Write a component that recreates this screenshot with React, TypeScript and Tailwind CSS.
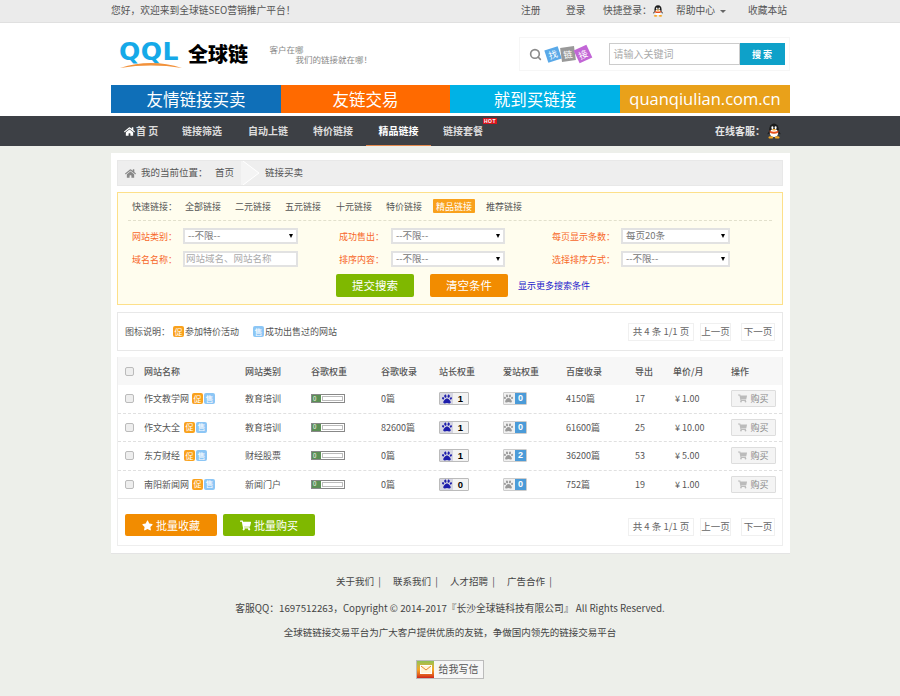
import { FaHome, FaPaw, FaShoppingCart, FaStar } from "react-icons/fa";
import { Search } from "lucide-react";

const rows = [
  { name: "作文教学网", cat: "教育培训", gg: "0篇", zz: 1, az: 0, bd: "4150篇", out: "17", price: "¥ 1.00", gap: "ml-[3px]" },
  { name: "作文大全", cat: "教育培训", gg: "82600篇", zz: 1, az: 0, bd: "61600篇", out: "25", price: "¥ 10.00", gap: "ml-[4px]" },
  { name: "东方财经", cat: "财经股票", gg: "0篇", zz: 1, az: 2, bd: "36200篇", out: "53", price: "¥ 5.00", gap: "ml-[4px]" },
  { name: "南阳新闻网", cat: "新闻门户", gg: "0篇", zz: 0, az: 0, bd: "752篇", out: "19", price: "¥ 1.00", gap: "ml-[3px]" },
];

const cols = "grid grid-cols-[19px_101px_66px_70px_58px_64px_63px_69px_38px_58px_45px] items-center pl-[7px]";

function Penguin({ size }: { size: number }) {
  return (
    <svg width={size} height={size} viewBox="0 0 20 20">
      <ellipse cx="10" cy="8" rx="6" ry="7.5" fill="#1c1c1c" />
      <ellipse cx="10" cy="12.5" rx="5" ry="5" fill="#fff" />
      <path d="M4.5 9.5q5.500 3 11 0v2.500q-5.500 3-11 0Z" fill="#e8501c" />
      <ellipse cx="8" cy="6" rx="1.300" ry="1.800" fill="#fff" />
      <ellipse cx="12" cy="6" rx="1.300" ry="1.800" fill="#fff" />
      <ellipse cx="10" cy="8.500" rx="2.500" ry="1" fill="#f5a623" />
      <ellipse cx="6" cy="18" rx="3" ry="1.500" fill="#f5a623" />
      <ellipse cx="14" cy="18" rx="3" ry="1.500" fill="#f5a623" />
      <path d="M4 10l-2.500 4 2.500-.5ZM16 10l2.500 4-2.500-.5Z" fill="#1c1c1c" />
    </svg>
  );
}

function Select({ value, width }: { value: string; width: string }) {
  return (
    <div className={`flex h-[16px] items-center justify-between border-2 border-[#e2e2e2] bg-white pl-[3px] pr-[3px] text-[9.500px] text-[#777] ${width}`}>
      <span>{value}</span>
      <span className="h-0 w-0 border-x-[2.5px] border-t-[4px] border-x-transparent border-t-black" />
    </div>
  );
}

function Field({ label, labelWidth, children }: { label: string; labelWidth: string; children: React.ReactNode }) {
  return (
    <div className="flex items-center">
      <span className={`text-[#f7682a] ${labelWidth}`}>{label}</span>
      {children}
    </div>
  );
}

function Promo({ gap }: { gap?: string }) {
  return <span className={`flex h-[11px] w-[11px] items-center justify-center rounded-[2px] bg-[#f9a11c] text-[8px] leading-none text-white ${gap ?? ""}`}>促</span>;
}

function Sold({ gap }: { gap?: string }) {
  return <span className={`flex h-[11px] w-[11px] items-center justify-center rounded-[2px] bg-[#8cc6f5] text-[8px] leading-none text-white ${gap ?? ""}`}>售</span>;
}

function Pager() {
  return (
    <div className="flex items-center text-[9.500px] text-[#666]">
      <span className="flex h-[18px] w-[66px] items-center justify-center border border-[#f0f0f0]">共 4 条 1/1 页</span>
      <span className="ml-[6px] flex h-[18px] w-[31px] items-center justify-center border border-[#f0f0f0]">上一页</span>
      <span className="ml-[10px] flex h-[18px] w-[34px] items-center justify-center border border-[#f0f0f0]">下一页</span>
    </div>
  );
}

function CheckBox() {
  return <span className="block h-[9px] w-[9px] rounded-[2px] border border-[#bbb] bg-[#eeeeee]" />;
}

export default function App() {
  return (
    <div className="min-h-[696px] bg-[#edefea] font-['Noto_Sans_CJK_SC','Liberation_Sans',sans-serif] text-[9.5px] leading-none text-[#555]">
      {/* top bar */}
      <div className="h-[23px] border-b border-[#e0e0e0] bg-[#ebebeb]">
        <div className="ml-[111px] flex h-full w-[679px] items-center pr-[3px] text-[9.750px] text-[#555]">
          <span className="flex-1">您好，欢迎来到全球链SEO营销推广平台！</span>
          <span className="w-[45px]">注册</span>
          <span className="w-[37px]">登录</span>
          <span className="flex w-[73px] items-center">
            快捷登录：
            <Penguin size={12} />
          </span>
          <span className="flex w-[72px] items-center">
            帮助中心
            <span className="ml-[5px] h-0 w-0 border-x-[3px] border-t-[3px] border-x-transparent border-t-[#666]" />
          </span>
          <span>收藏本站</span>
        </div>
      </div>

      {/* logo + search */}
      <div className="bg-white">
        <div className="ml-[111px] w-[679px]">
          <div className="flex h-[62px] items-center">
            <div className="ml-[8px] flex w-[150.500px] items-center">
              <div className="mt-[3px] w-[68px]">
                <div className="font-['DejaVu_Sans',sans-serif] text-[25px] font-bold leading-[19px] tracking-[0.5px] text-[#15a9e8]">QQL</div>
                <svg className="block" width="64" height="8" viewBox="0 0 66 8">
                  <path d="M1 7Q33-3 65 7Q33 2 1 7Z" fill="#f2913a" />
                </svg>
              </div>
              <span className="ml-[1px] text-[20px] font-black text-black">全球链</span>
            </div>
            <div className="w-[249px] text-[8.500px] text-[#888]">
              <div>客户在哪</div>
              <div className="mt-[2px] pl-[26px]">我们的链接就在哪！</div>
            </div>
            <div className="flex h-[34px] w-[271px] items-center border border-[#f6f6f6] pl-[9px]">
              <Search size={13} strokeWidth={3} className="text-[#8a8a8a]" />
              <div className="ml-[4px] flex w-[63px] items-center text-[9px] text-white">
                <span className="flex h-[13px] w-[14px] rotate-[-18deg] items-center justify-center bg-[#5aa9e8]">找</span>
                <span className="ml-[1px] flex h-[14px] w-[14px] rotate-[-8deg] items-center justify-center bg-[#999]">链</span>
                <span className="ml-[1px] flex h-[14px] w-[14px] rotate-[-25deg] items-center justify-center bg-[#c266d6]">接</span>
              </div>
              <div className="flex h-[22px] w-[131px] items-center border border-[#ccc] bg-white pl-[4px] text-[10px] text-[#aaa]">请输入关键词</div>
              <div className="flex h-[22px] w-[45px] items-center justify-center bg-[#0ea1c9] text-[9px] font-bold text-white">搜 索</div>
            </div>
          </div>
          <div className="grid h-[28px] grid-cols-[170px_169px_170px_170px] text-center text-[16.500px] leading-[28px] text-white">
            <div className="bg-[#0f6fb8]">友情链接买卖</div>
            <div className="bg-[#ff6a00]">友链交易</div>
            <div className="bg-[#00b2e6]">就到买链接</div>
            <div className="bg-[#e9a11a] font-['Open_Sans',sans-serif]">quanqiulian.com.cn</div>
          </div>
        </div>
        <div className="h-[3px]" />
      </div>

      {/* nav */}
      <div className="h-[30px] bg-[#3d4045]">
        <div className="ml-[111px] flex h-full w-[679px] items-center text-[10px] font-bold text-[#ddd]">
          <span className="ml-[13px] flex w-[58px] items-center">
            <FaHome size={11} className="mr-[1px] text-white" />
            首 页
          </span>
          <span className="w-[66px]">链接筛选</span>
          <span className="w-[65px]">自动上链</span>
          <span className="w-[53px]">特价链接</span>
          <span className="flex h-full w-[65px] items-center justify-center border-b border-[#e58a4e] text-white">精品链接</span>
          <span className="relative ml-[12px] flex-1">
            链接套餐
            <span className="absolute left-[40px] top-[-8px] bg-[#d8141c] px-[1px] font-['Liberation_Sans',sans-serif] text-[5px] font-bold leading-[6px] tracking-[0.5px] text-white">HOT</span>
          </span>
          <span className="text-[#e6e6e6]">在线客服：</span>
          <span className="ml-[1px] mr-[8px]">
            <Penguin size={16} />
          </span>
        </div>
      </div>

      {/* main card */}
      <div className="ml-[111px] mt-[7px] h-[401px] w-[679px] border-b border-[#e4e4e4] bg-white pl-[6px] pr-[7px] pt-[7px] text-[9px]">
        <div className="flex h-[26px] items-center border border-[#e8e8e8] bg-[#eeeeee] pl-[7px] text-[9.500px]">
          <FaHome size={11} className="text-[#888]" />
          <span className="ml-[5px] w-[74px]">我的当前位置：</span>
          <span className="w-[26px]">首页</span>
          <svg width="20" height="24" viewBox="0 0 20 24" className="mr-[4px]">
            <path d="M2 0L18 12L2 24H0V0Z" fill="#f4f4f4" />
            <path d="M2 0L18 12L2 24" fill="none" stroke="#fff" />
          </svg>
          <span>链接买卖</span>
        </div>

        {/* filter panel */}
        <div className="mt-[6px] h-[113px] border border-[#fde08a] bg-[#fffdee] px-[10px] pt-[6px]">
          <div className="flex h-[14px] items-center pl-[4px]">
            <span className="w-[53px]">快速链接：</span>
            <span className="w-[50px]">全部链接</span>
            <span className="w-[50px]">二元链接</span>
            <span className="w-[51px]">五元链接</span>
            <span className="w-[50px]">十元链接</span>
            <span className="w-[47px]">特价链接</span>
            <span className="flex h-[14px] w-[42px] items-center justify-center rounded-[1px] bg-[#f9a11c] text-white">精品链接</span>
            <span className="ml-[11px]">推荐链接</span>
          </div>
          <div className="mb-[7px] mt-[7px] border-t border-dashed border-[#e2e0cc]" />
          <div className="grid grid-cols-[207px_213px_1fr] gap-y-[7px] pl-[4px]">
            <Field label="网站类别：" labelWidth="w-[51px]"><Select value="--不限--" width="w-[115px]" /></Field>
            <Field label="成功售出：" labelWidth="w-[52px]"><Select value="--不限--" width="w-[114px]" /></Field>
            <Field label="每页显示条数：" labelWidth="w-[69px]"><Select value="每页20条" width="w-[109px]" /></Field>
            <Field label="域名名称：" labelWidth="w-[51px]">
              <div className="flex h-[16px] w-[115px] items-center border-2 border-[#e2e2e2] bg-white pl-[1px] text-[9.500px] text-[#aaa]">网站域名、网站名称</div>
            </Field>
            <Field label="排序内容：" labelWidth="w-[52px]"><Select value="--不限--" width="w-[114px]" /></Field>
            <Field label="选择排序方式：" labelWidth="w-[69px]"><Select value="--不限--" width="w-[109px]" /></Field>
          </div>
          <div className="ml-[208px] mt-[7px] flex items-center">
            <span className="flex h-[23px] w-[78px] items-center justify-center rounded-[2px] bg-[#7fb800] text-[11.500px] text-white">提交搜索</span>
            <span className="ml-[16px] flex h-[23px] w-[78px] items-center justify-center rounded-[2px] bg-[#f28c00] text-[11.500px] text-white">清空条件</span>
            <span className="ml-[10px] text-[#2222cc]">显示更多搜索条件</span>
          </div>
        </div>

        {/* legend */}
        <div className="mt-[7px] flex h-[39px] items-center justify-between border border-[#e8e8e8] pl-[7px] pr-[7px]">
          <div className="flex items-center">
            <span className="w-[48px]">图标说明：</span>
            <Promo />
            <span className="ml-[1px]">参加特价活动</span>
            <Sold gap="ml-[14px]" />
            <span className="ml-[1px]">成功出售过的网站</span>
          </div>
          <Pager />
        </div>

        {/* table */}
        <div className="mt-[6px] h-[189px] border border-[#eeeeee] border-t-0">
          <div className={`${cols} h-[28px] bg-[#f7f7f7] font-medium`}>
            <CheckBox />
            <span>网站名称</span>
            <span>网站类别</span>
            <span>谷歌权重</span>
            <span>谷歌收录</span>
            <span>站长权重</span>
            <span>爱站权重</span>
            <span>百度收录</span>
            <span>导出</span>
            <span>单价/月</span>
            <span>操作</span>
          </div>
          {rows.map((row, i) => (
            <div key={row.name} className={`${cols} h-[28.500px] border-b ${i === 3 ? "border-solid border-[#e8e8e8]" : "border-dashed border-[#e0e0e0]"}`}>
              <CheckBox />
              <span className="flex items-center">
                {row.name}
                <Promo gap={row.gap} />
                <Sold gap="ml-[1px]" />
              </span>
              <span>{row.cat}</span>
              <span className="flex h-[9px] w-[34px] border border-[#888]">
                <span className="flex w-[9px] items-center bg-[#5b8f55] pl-[1px] text-[6px] text-white">0</span>
                <span className="mx-[1px] my-[1px] flex-1 border border-[#bbb] bg-white" />
              </span>
              <span>{row.gg}</span>
              <span className="flex h-[13px] w-[30px] items-center rounded-[1px] border border-[#bbb] bg-[#f3f3f3]">
                <span className="flex h-full w-[13px] items-center justify-center bg-[#d6d6e2]">
                  <FaPaw size={10} className="text-[#1d1dab]" />
                </span>
                <span className="flex-1 text-center font-['Liberation_Sans',sans-serif] text-[9.500px] font-bold text-black">{row.zz}</span>
              </span>
              <span className="flex h-[13px] w-[24px] items-center justify-end rounded-[1px] border border-[#ccc] bg-[#f0f0f0]">
                <FaPaw size={9} className="mr-[2px] text-[#999]" />
                <span className="flex h-[11px] w-[11px] items-center justify-center bg-[#4b9bd8] font-['Liberation_Sans',sans-serif] font-bold text-white">{row.az}</span>
              </span>
              <span>{row.bd}</span>
              <span>{row.out}</span>
              <span className="pl-[2px]">{row.price}</span>
              <span className="flex h-[17px] w-[45px] items-center justify-center gap-[3px] rounded-[1px] border border-[#ddd] bg-[#f4f4f4] text-[#888]">
                <FaShoppingCart size={9} className="text-[#bbb]" />
                购买
              </span>
            </div>
          ))}
          <div className="ml-[7px] mt-[15px] flex gap-[6px] text-[11px] text-white">
            <span className="flex h-[22px] w-[92px] items-center justify-center gap-[3px] rounded-[2px] bg-[#f28c00]">
              <FaStar size={11} />
              批量收藏
            </span>
            <span className="flex h-[22px] w-[92px] items-center justify-center gap-[3px] rounded-[2px] bg-[#7fb800]">
              <FaShoppingCart size={11} />
              批量购买
            </span>
            <div className="ml-auto mr-[7px] mt-[3px] flex items-center">
              <Pager />
            </div>
          </div>
        </div>
      </div>

      {/* footer */}
      <div className="text-center text-[#444]">
        <div className="mt-[23px] flex justify-center pr-[8px]">
          <span className="w-[57px] text-left">关于我们 &nbsp;|</span>
          <span className="w-[57px] text-left">联系我们 &nbsp;|</span>
          <span className="w-[57px] text-left">人才招聘 &nbsp;|</span>
          <span className="w-[49px] text-left">广告合作 &nbsp;|</span>
        </div>
        <div className="mt-[17px] text-[9.750px]">客服QQ：1697512263，Copyright © 2014-2017『长沙全球链科技有限公司』 All Rights Reserved.</div>
        <div className="mt-[15px]">全球链链接交易平台为广大客户提供优质的友链，争做国内领先的链接交易平台</div>
        <div className="mt-[22px] flex justify-center">
          <div className="flex h-[19px] w-[68px] items-center border border-[#bbb] bg-[#f6f6f6]">
            <span className="flex h-full w-[17px] items-center justify-center bg-gradient-to-b from-[#8cc152] via-[#f5a623] to-[#d0201a]">
              <svg width="12" height="9" viewBox="0 0 12 9">
                <rect x="0.500" y="0.500" width="11" height="8" fill="#fff5d8" stroke="#fff" />
                <path d="M1 1l5 4 5-4" fill="none" stroke="#e8862a" />
              </svg>
            </span>
            <span className="flex-1 text-[10px] text-[#555]">给我写信</span>
          </div>
        </div>
      </div>
    </div>
  );
}
